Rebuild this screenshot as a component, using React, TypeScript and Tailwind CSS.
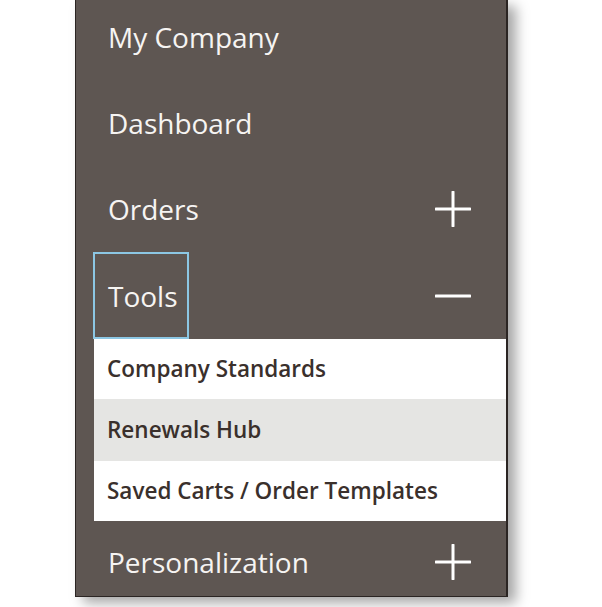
import { useState } from "react";

type Item = {
  label: string;
  expandable?: boolean;
  children?: string[];
};

const items: Item[] = [
  { label: "My Company" },
  { label: "Dashboard" },
  { label: "Orders", expandable: true },
  {
    label: "Tools",
    expandable: true,
    children: ["Company Standards", "Renewals Hub", "Saved Carts / Order Templates"],
  },
  { label: "Personalization", expandable: true },
];

function PlusMinus({ open }: { open: boolean }) {
  return (
    <svg width="36" height="36" viewBox="0 0 36 36" className="shrink-0">
      <line x1="1" y1="18" x2="35" y2="18" stroke="#ffffff" strokeWidth="3" strokeLinecap="round" />
      {!open && (
        <line x1="18" y1="1" x2="18" y2="35" stroke="#ffffff" strokeWidth="3" strokeLinecap="round" />
      )}
    </svg>
  );
}

export default function App() {
  const [openLabel, setOpenLabel] = useState<string>("Tools");
  const [hovered] = useState<string>("Renewals Hub");

  return (
    <div
      className="w-[602px] h-[607px] overflow-hidden bg-white"
      style={{ fontFamily: '"Open Sans", "Noto Sans", sans-serif' }}
    >
      <div className="ml-[75px] w-[433px] h-[597px] bg-[#5e5652] border-l border-b border-r-2 border-[#2b2523] shadow-[8px_6px_12px_rgba(0,0,0,0.35)] overflow-hidden">
        <div className="-mt-[6px]">
          {items.map((item, i) => {
            const open = openLabel === item.label && !!item.children;
            const focused = item.label === "Tools";
            const rowHeight =
              i === items.length - 1 ? "h-[82px]" : focused ? "h-[87px]" : "h-[86px]";
            return (
              <div key={item.label}>
                <div className={`flex items-center justify-between pr-[35px] ${rowHeight}`}>
                  <button
                    type="button"
                    onClick={() =>
                      item.children && setOpenLabel(open ? "" : item.label)
                    }
                    className={[
                      "ml-[17px] h-full flex items-center pl-[13px] pr-[9px] text-[28px] text-[#f6f4f2] leading-none border-2",
                      focused ? "border-[#8cc7e4]" : "border-transparent",
                    ].join(" ")}
                  >
                    {item.label}
                  </button>
                  {item.expandable && <PlusMinus open={open} />}
                </div>
                {open && item.children && (
                  <div className="ml-[18px] bg-white">
                    {item.children.map((c, j) => (
                      <div
                        key={c}
                        className={[
                          "flex items-center pl-[13px] text-[22.5px] font-semibold text-[#3a302c]",
                          j === 1 ? "h-[62px]" : "h-[60px]",
                          c === hovered ? "bg-[#e5e5e3]" : "bg-white",
                        ].join(" ")}
                      >
                        {c}
                      </div>
                    ))}
                  </div>
                )}
              </div>
            );
          })}
        </div>
      </div>
    </div>
  );
}
